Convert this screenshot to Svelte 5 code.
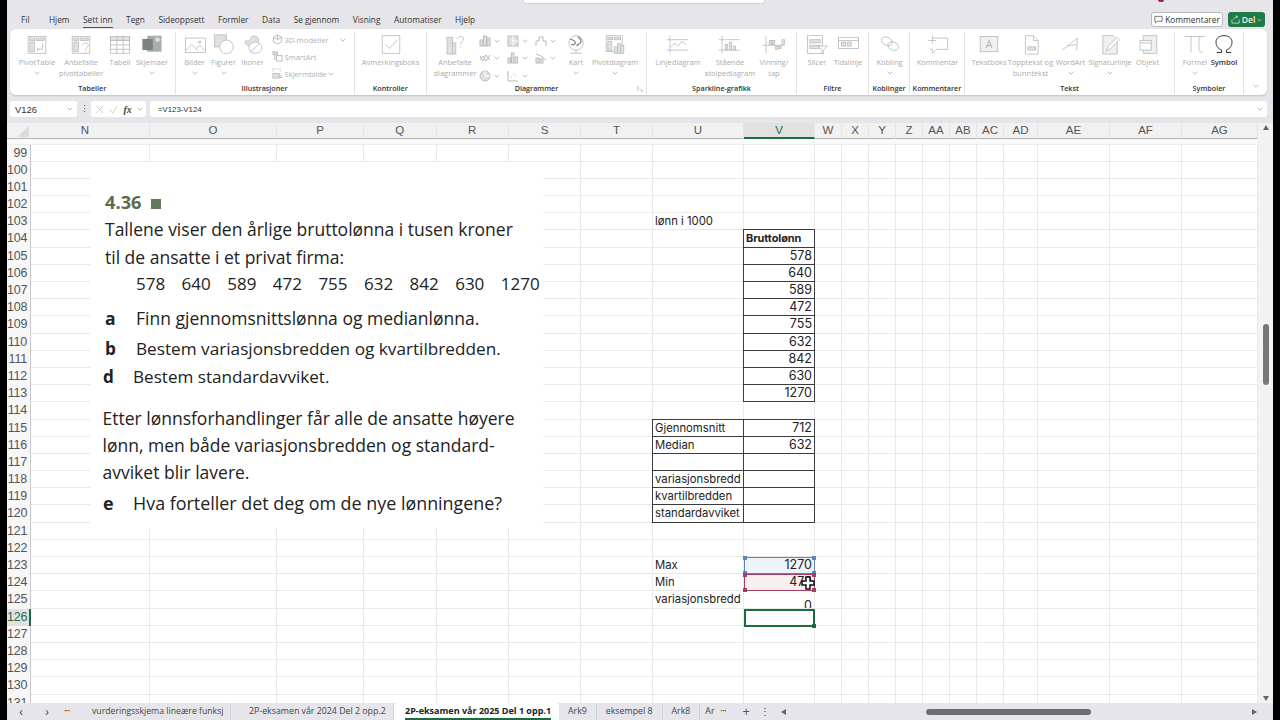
<script>
  const tabs = ['Fil', 'Hjem', 'Sett inn', 'Tegn', 'Sideoppsett', 'Formler', 'Data', 'Se gjennom', 'Visning', 'Automatiser', 'Hjelp'];

  const groups = [
    { name: 'Tabeller', w: 165.5, pad: 9, items: [
      { l: ['PivotTable'], ic: 'pivot', w: 36, ch: true },
      { l: ['Anbefalte', 'pivottabeller'], ic: 'pivot2', w: 52 },
      { l: ['Tabell'], ic: 'table', w: 26 },
      { l: ['Skjemaer'], ic: 'forms', w: 38, ch: true }
    ] },
    { name: 'Illustrasjoner', w: 179, pad: 4, small: 'illus', items: [
      { l: ['Bilder'], ic: 'image', w: 30, ch: true },
      { l: ['Figurer'], ic: 'shapes', w: 28, ch: true },
      { l: ['Ikoner'], ic: 'icons', w: 30 }
    ] },
    { name: 'Kontroller', w: 72.5, pad: 6, items: [
      { l: ['Avmerkingsboks'], ic: 'check', w: 60 }
    ] },
    { name: 'Diagrammer', w: 220, pad: 4, small: 'charts', launcher: true, items: [
      { l: ['Anbefalte', 'diagrammer'], ic: 'recchart', w: 48 },
      { l: ['Kart'], ic: 'globe', w: 26, ch: true, after: true },
      { l: ['Pivotdiagram'], ic: 'pivotchart', w: 52, ch: true, after: true }
    ] },
    { name: 'Sparkline-grafikk', w: 150, pad: 6, items: [
      { l: ['Linjediagram'], ic: 'sline', w: 50 },
      { l: ['Stående', 'stolpediagram'], ic: 'scol', w: 54 },
      { l: ['Vinning/', 'tap'], ic: 'swin', w: 34 }
    ] },
    { name: 'Filtre', w: 72, pad: 7, items: [
      { l: ['Slicer'], ic: 'slicer', w: 26 },
      { l: ['Tidslinje'], ic: 'timeline', w: 36 }
    ] },
    { name: 'Koblinger', w: 41, pad: 2, items: [
      { l: ['Kobling'], ic: 'link', w: 37, ch: true }
    ] },
    { name: 'Kommentarer', w: 55, pad: 2, items: [
      { l: ['Kommentar'], ic: 'comment', w: 51 }
    ] },
    { name: 'Tekst', w: 210, pad: 6, items: [
      { l: ['Tekstboks'], ic: 'textbox', w: 36 },
      { l: ['Topptekst og', 'bunntekst'], ic: 'header', w: 47 },
      { l: ['WordArt'], ic: 'wordart', w: 33, ch: true },
      { l: ['Signaturlinje'], ic: 'sign', w: 46, ch: true },
      { l: ['Objekt'], ic: 'object', w: 29 }
    ] },
    { name: 'Symboler', w: 69, pad: 6, items: [
      { l: ['Formel'], ic: 'pi', w: 28, ch: true },
      { l: ['Symbol'], ic: 'omega', w: 30, on: true }
    ] }
  ];

  const colDefs = [
    ['N', 119], ['O', 127], ['P', 87], ['Q', 72.5], ['R', 72.5], ['S', 72], ['T', 72], ['U', 91], ['V', 71],
    ['W', 27], ['X', 27], ['Y', 27], ['Z', 27], ['AA', 27], ['AB', 27], ['AC', 27], ['AD', 34], ['AE', 72], ['AF', 72], ['AG', 76]
  ];
  const rows = Array.from({ length: 33 }, (_, i) => 99 + i);
  const ROW_H = 17.19;
  const HEAD_W = 24;
  const HEAD_H = 21.5;

  const cells = {
    U103: { t: 'lønn i 1000' },
    V104: { t: 'Bruttolønn', bold: true, box: true },
    U115: { t: 'Gjennomsnitt', box: true },
    V115: { t: '712', num: true, box: true },
    U116: { t: 'Median', box: true },
    V116: { t: '632', num: true, box: true },
    U117: { t: '', box: true },
    V117: { t: '', box: true },
    U118: { t: 'variasjonsbredd', box: true },
    V118: { t: '', box: true },
    U119: { t: 'kvartilbredden', box: true },
    V119: { t: '', box: true },
    U120: { t: 'standardavviket', box: true },
    V120: { t: '', box: true },
    U123: { t: 'Max' },
    V123: { t: '1270', num: true },
    U124: { t: 'Min' },
    V124: { t: '472', num: true },
    U125: { t: 'variasjonsbredd' },
    V125: { t: '0', num: true, low: true }
  };
  [578, 640, 589, 472, 755, 632, 842, 630, 1270].forEach((n, i) => {
    cells['V' + (105 + i)] = { t: String(n), num: true, box: true };
  });

  const salaries = [578, 640, 589, 472, 755, 632, 842, 630, 1270];

  function colLeft(name) {
    let x = HEAD_W;
    for (const [c, w] of colDefs) {
      if (c === name) return x;
      x += w;
    }
    return x;
  }
  const rowTop = (r) => HEAD_H + (r - 99) * ROW_H;
  const gridColumns = HEAD_W + 'px ' + colDefs.map((c) => c[1] + 'px').join(' ');

  const selections = [
    { row: 123, kind: 'blue' },
    { row: 124, kind: 'red' }
  ];
</script>

{#snippet chevron()}
  <svg class="chev" viewBox="0 0 6 4" width="6" height="4"><path d="M.7.8 3 3.1 5.3.8" /></svg>
{/snippet}

{#snippet icon(name)}
  <svg class="ic" viewBox="0 0 30 26" width="24" height="21">
    {#if name === 'pivot'}
      <rect x="4" y="3" width="22" height="21" />
      <rect x="6" y="5" width="6" height="3" class="f" /><rect x="14" y="5" width="10" height="3" class="f" />
      <rect x="6" y="10" width="6" height="12" class="f" />
      <path d="M22 12v7h-7M17 17l-2 2 2 2" />
    {:else if name === 'pivot2'}
      <rect x="4" y="3" width="22" height="21" />
      <rect x="6" y="5" width="6" height="3" class="f" /><rect x="14" y="5" width="10" height="3" class="f" />
      <rect x="6" y="10" width="6" height="12" class="f" />
      <path d="M17 14c0-4 7-4 7 0 0 3-3.500 3-3.500 6M20.500 22v1.500" />
    {:else if name === 'table'}
      <rect x="3" y="3" width="24" height="21" />
      <rect x="3" y="3" width="24" height="5" class="f" />
      <path d="M3 8h24M3 13.500h24M3 19h24M11 3v21M19 3v21" />
    {:else if name === 'forms'}
      <rect x="9" y="2" width="18" height="20" class="fd" />
      <rect x="3" y="6" width="13" height="14" class="fdd" />
      <circle cx="22" cy="7" r="3" class="f" />
    {:else if name === 'image'}
      <rect x="3" y="5" width="25" height="18" />
      <path d="M3 21l8-8 8 8M16 18l5-4 7 7" class="s2" />
      <circle cx="21" cy="10" r="1.500" class="f" />
    {:else if name === 'shapes'}
      <rect x="3" y="1" width="15" height="15" class="f" />
      <circle cx="18" cy="16" r="8.500" class="w" />
    {:else if name === 'icons'}
      <path d="M5 9c2-1 4-1 6 0 0-5 4-8 8-6 3 1 4 5 2 8-3 3-9 5-13 3-2-1-3-3-3-5z" class="f" />
      <ellipse cx="18" cy="17" rx="8" ry="7" class="w" />
      <path d="M11 23 23 12" />
    {:else if name === 'check'}
      <rect x="4" y="2" width="22" height="22" />
      <path d="M8 13l5 5 10-11" class="s2" />
    {:else if name === 'recchart'}
      <rect x="5" y="4" width="7" height="21" class="f" />
      <rect x="12" y="11" width="4" height="14" class="f" />
      <path d="M18 6c0-4 8-4 8 0 0 3-4 3-4 7M22 15v1.500" />
    {:else if name === 'globe'}
      <circle cx="15" cy="11" r="9" />
      <path d="M8 6c3 2 5 1 6 4s-3 4-5 3M17 3c3 2 5 4 4 7s-4 2-5 5" class="sd" />
      <path d="M8 24h14M15 20v4" />
    {:else if name === 'pivotchart'}
      <rect x="4" y="2" width="20" height="20" />
      <rect x="6" y="4" width="6" height="3" class="f" /><rect x="14" y="4" width="8" height="3" class="f" />
      <rect x="6" y="9" width="5" height="12" class="f" />
      <rect x="14" y="16" width="4" height="8" class="f" /><rect x="18" y="12" width="4" height="12" class="f" /><rect x="22" y="14" width="4" height="10" class="f" />
    {:else if name === 'sline'}
      <path d="M5 2v22M1 7h27M1 20h27" /><path d="M6 16l5-5 4 4 5-6 5 4" />
    {:else if name === 'scol'}
      <path d="M5 2v22M1 7h26M1 20h26" />
      <rect x="9" y="13" width="3" height="7" class="f" /><rect x="14" y="10" width="3" height="10" class="f" /><rect x="19" y="15" width="3" height="5" class="f" />
    {:else if name === 'swin'}
      <path d="M5 2v22M1 14h27" />
      <rect x="9" y="8" width="3" height="5" class="f" /><rect x="13" y="8" width="3" height="5" class="f" /><rect x="17" y="15" width="3" height="4" class="f" /><rect x="21" y="15" width="3" height="3" class="f" /><rect x="25" y="7" width="3" height="6" class="f" />
    {:else if name === 'slicer'}
      <rect x="3" y="2" width="19" height="22" />
      <rect x="6" y="7" width="13" height="4" class="f" /><rect x="6" y="14" width="13" height="4" class="f" />
      <path d="M16 15h12l-5 5v5l-2-1v-4z" class="w" />
    {:else if name === 'timeline'}
      <rect x="3" y="4" width="25" height="14" />
      <path d="M3 8h25" /><rect x="7" y="10" width="5" height="5" class="f" /><rect x="14" y="10" width="5" height="5" class="f" />
    {:else if name === 'link'}
      <ellipse cx="11" cy="9" rx="7" ry="5" transform="rotate(25 11 9)" />
      <ellipse cx="19" cy="15" rx="7" ry="5" transform="rotate(25 19 15)" />
    {:else if name === 'comment'}
      <path d="M8 5h19v14H13l-5 5v-5H5" /><path d="M3 8h10M8 2v10" />
    {:else if name === 'textbox'}
      <rect x="4" y="3" width="22" height="19" class="fl" />
      <text x="15" y="17" class="ic-t">A</text>
    {:else if name === 'header'}
      <path d="M8 2h10l6 6v17H8z" /><path d="M18 2v6h6" />
      <rect x="11" y="16" width="10" height="4" class="f" />
    {:else if name === 'wordart'}
      <path d="M4 20 23 5l-1 15M10 15l12-2" class="s2" />
    {:else if name === 'sign'}
      <path d="M6 2h13l5 5v18H6z" class="fl" />
      <path d="M10 21l3-6 11-11 3 3-11 11z" class="w" />
    {:else if name === 'object'}
      <rect x="9" y="2" width="17" height="22" class="fl" />
      <rect x="5" y="8" width="14" height="12" class="w" />
      <path d="M5 11h14" />
    {:else if name === 'pi'}
      <path d="M2 3h25M10 3v20M20 3v16c0 3 2 4 5 3" class="s2" />
    {:else if name === 'omega'}
      <path d="M6 23h6v-3C7 18 5 14 5 10c0-5 4-8 10-8s10 3 10 8c0 4-2 8-7 10v3h6" class="dark" />
    {/if}
  </svg>
{/snippet}

{#snippet mini(kind)}
  <svg class="ic" viewBox="0 0 12 12" width="12" height="12">
    {#if kind === 'bar'}
      <rect x="1" y="5" width="3" height="6" class="f" /><rect x="4.500" y="1" width="3" height="10" class="f" /><rect x="8" y="3" width="3" height="8" class="f" />
    {:else if kind === 'tree'}
      <rect x="1" y="1" width="10" height="10" class="f" /><path d="M6 1v10M6 6h5" class="wl" />
    {:else if kind === 'water'}
      <path d="M1 11V6h3V2h4v4h3v5" />
    {:else if kind === 'line'}
      <path d="M1 4l3 5 3-6 4 5M1 8l3-4 3 5 4-6" />
    {:else if kind === 'stat'}
      <rect x="1" y="6" width="2.500" height="5" class="f" /><rect x="4.500" y="1" width="2.500" height="10" class="f" /><rect x="8" y="5" width="2.500" height="6" class="f" />
    {:else if kind === 'combo'}
      <rect x="1" y="6" width="3" height="5" class="f" /><rect x="5" y="7" width="3" height="4" class="f" /><path d="M1 2l5 2 5 4" />
    {:else if kind === 'pie'}
      <circle cx="6" cy="6" r="5" class="f" /><path d="M6 1v5h5" class="wl" />
    {:else if kind === 'scatter'}
      <path d="M1 1v10h10" /><path d="M4 7h1M6 4h1M8 6h1" />
    {/if}
  </svg>
{/snippet}

<div class="screen">
  <div class="letterbox"></div>
  <div class="app">
    <div class="titlebar">
      <div class="search"></div>
      <div class="avatar"></div>
    </div>

    <div class="menubar">
      <nav class="tabs">
        {#each tabs as tab}
          <span class="tab" class:active={tab === 'Sett inn'} class:file={tab === 'Fil'}>{tab}</span>
        {/each}
      </nav>
      <button class="comments">
        <svg viewBox="0 0 10 10" width="9" height="9"><path d="M1 1.500h8v5.500H3.500L1.500 9V7H1z" /></svg>
        Kommentarer
      </button>
      <button class="share">
        <svg viewBox="0 0 10 10" width="9" height="9"><path d="M1 5v4h8V5M3 5c0-2 2-3 4-3M5.500.5 7.500 2l-2 1.500" /></svg>
        Del
        <svg class="share-chev" viewBox="0 0 6 4" width="5" height="4"><path d="M.7.8 3 3.100 5.300.8" /></svg>
      </button>
    </div>

    <section class="ribbon">
      {#each groups as g}
        <div class="group" style="width:{g.w}px">
          <div class="group-body" style="padding-left:{g.pad}px">
            {#each g.items.filter((i) => !i.after) as item}
              <div class="rb" class:on={item.on} style="width:{item.w}px">
                {@render icon(item.ic)}
                {#each item.l as line}<span class="rb-label">{line}</span>{/each}
                {#if item.ch}{@render chevron()}{/if}
              </div>
            {/each}
            {#if g.small === 'illus'}
              <div class="small-col">
                <div class="small">
                  <svg class="ic" viewBox="0 0 12 12" width="11" height="11"><path d="M6 1l4.500 2.500v5L6 11 1.500 8.500v-5zM6 6V1M6 6l4.500-2.500M6 6l-4.500-2.500" /></svg>
                  <span>3D-modeller</span>
                  <span class="small-ch">{@render chevron()}</span>
                </div>
                <div class="small">
                  <svg class="ic" viewBox="0 0 12 12" width="11" height="11"><rect x="1" y="1" width="5" height="3" class="f" /><rect x="5" y="5" width="6" height="6" /><path d="M3 4v5h2" /></svg>
                  <span>SmartArt</span>
                </div>
                <div class="small">
                  <svg class="ic" viewBox="0 0 12 12" width="11" height="11"><path d="M1 1h8v3M1 1v4" stroke-dasharray="1 1" /><rect x="1" y="6" width="7" height="5" class="f" /><path d="M10 7v4M8.500 9.500 10 11l1.500-1.500" /></svg>
                  <span>Skjermbilde</span>
                  {@render chevron()}
                </div>
              </div>
            {/if}
            {#if g.small === 'charts'}
              <div class="chart-grid">
                {#each ['bar', 'tree', 'water', 'line', 'stat', 'combo', 'pie', 'scatter'] as kind}
                  <div class="chart-btn">{@render mini(kind)}{@render chevron()}</div>
                {/each}
              </div>
            {/if}
            {#each g.items.filter((i) => i.after) as item}
              <div class="rb" style="width:{item.w}px">
                {@render icon(item.ic)}
                {#each item.l as line}<span class="rb-label">{line}</span>{/each}
                {#if item.ch}{@render chevron()}{/if}
              </div>
            {/each}
          </div>
          <div class="group-name">
            {g.name}
            {#if g.launcher}
              <svg class="launcher" viewBox="0 0 8 8" width="6" height="6"><path d="M1 7V1h2M7 5v2H5M3 3l4 4" /></svg>
            {/if}
          </div>
        </div>
      {/each}
      <div class="collapse">{@render chevron()}</div>
    </section>

    <div class="formula-row">
      <div class="namebox">V126 {@render chevron()}</div>
      <span class="dots">⋮</span>
      <div class="fx-box">
        <svg class="fx-mark" viewBox="0 0 10 10" width="9" height="9"><path d="M1 1l8 8M9 1 1 9" /></svg>
        <svg class="fx-mark" viewBox="0 0 10 10" width="9" height="9"><path d="M1 5l3 4 5-8" /></svg>
        <span class="fx">fx</span>
        {@render chevron()}
      </div>
      <div class="formula">=V123-V124 <span class="formula-ch">{@render chevron()}</span></div>
    </div>

    <div class="workbook">
      <div class="sheet-wrap">
        <div class="sheet" style="grid-template-columns:{gridColumns};grid-template-rows:16px 5.500px repeat(33, {ROW_H}px)">
          <div class="corner"><span class="corner-mark"></span></div>
          {#each colDefs as [c]}
            <div class="col-head" class:cur={c === 'V'} class:part={c === 'N'}>{c}</div>
          {/each}
          <div class="stripe"></div>
          {#each rows as r}
            <div class="row-head" class:cur={r === 126}>{r}</div>
            {#each colDefs as [c]}
              {@const d = cells[c + r]}
              <div
                class="cell"
                class:box={d?.box}
                class:num={d?.num}
                class:bold={d?.bold}
                class:low={d?.low}
                class:tint-blue={c === 'V' && r === 123}
                class:tint-red={c === 'V' && r === 124}
              >{d?.t ?? ''}</div>
            {/each}
          {/each}
        </div>

        <!-- pasted picture of the exercise, lies over the grid -->
        <div class="picture">
          <div class="pic-title">4.36 <span class="pic-square"></span></div>
          <p class="l1">Tallene viser den årlige bruttolønna i tusen kroner</p>
          <p class="l2">til de ansatte i et privat firma:</p>
          <div class="numbers">
            {#each salaries as n}<span>{n}</span>{/each}
          </div>
          <p class="task t-a"><b>a</b>Finn gjennomsnittslønna og medianlønna.</p>
          <p class="task t-b"><b>b</b>Bestem variasjonsbredden og kvartilbredden.</p>
          <p class="task t-d"><b>d</b>Bestem standardavviket.</p>
          <p class="para">Etter lønnsforhandlinger får alle de ansatte høyere<br />lønn, men både variasjonsbredden og standard-<br />avviket blir lavere.</p>
          <p class="task t-e"><b>e</b>Hva forteller det deg om de nye lønningene?</p>
        </div>

        {#each selections as s}
          <div class="sel {s.kind}" style="left:{colLeft('V')}px;top:{rowTop(s.row)}px;height:{ROW_H}px">
            <i class="h tl"></i><i class="h tr"></i><i class="h bl"></i><i class="h br"></i>
          </div>
        {/each}
        <div class="sel green" style="left:{colLeft('V')}px;top:{rowTop(126)}px;height:{ROW_H + 1}px"><i class="h br"></i></div>

        <svg class="cursor" style="left:{colLeft('V') + 57}px;top:{rowTop(124) + 2}px" viewBox="0 0 14 14" width="14" height="14">
          <path d="M5 1h4v4h4v4H9v4H5V9H1V5h4z" />
        </svg>
      </div>

      <div class="vscroll">
        <span class="tri up"></span>
        <span class="vthumb"></span>
        <span class="tri down"></span>
      </div>
    </div>

    <footer class="sheetbar">
      <span class="nav nav-prev">‹</span>
      <span class="nav">›</span>
      <span class="nav more">•••</span>
      <span class="sheet-tab first">vurderingsskjema lineære funksj</span>
      <span class="sheet-tab second">2P-eksamen vår 2024 Del 2 opp.2</span>
      <span class="sheet-tab active"><span>2P-eksamen vår 2025 Del 1 opp.1</span></span>
      <span class="sheet-tab short">Ark9</span>
      <span class="sheet-tab short">eksempel 8</span>
      <span class="sheet-tab short">Ark8</span>
      <span class="sheet-tab short cut">Ar</span>
      <span class="nav more">•••</span>
      <span class="nav plus">+</span>
      <span class="nav kebab">⋮</span>
      <span class="htri left"></span>
      <div class="htrack"><span class="hthumb"></span></div>
      <span class="htri right"></span>
    </footer>
  </div>
  <div class="letterbox"></div>
</div>

<style>
  :global(body) {
    margin: 0;
    background: #000;
  }

  .screen {
    display: flex;
    width: 1280px;
    height: 720px;
    overflow: hidden;
  }

  .letterbox {
    width: 7px;
    flex: none;
    background: #000;
  }

  .app {
    flex: 1;
    min-width: 0;
    display: flex;
    flex-direction: column;
    background: #e6e6ea;
    font-family: "Open Sans", "Noto Sans", sans-serif;
  }

  .titlebar {
    height: 11px;
    flex: none;
    display: flex;
    align-items: flex-start;
  }

  .search {
    width: 242px;
    height: 4px;
    margin-left: 516px;
    background: #fff;
    border: 1px solid #d4d4d8;
    border-top: 0;
    box-sizing: border-box;
    border-radius: 0 0 3px 3px;
  }

  .avatar {
    width: 6px;
    height: 2px;
    margin-left: 393px;
    background: #a3243b;
    border-radius: 0 0 3px 3px;
  }

  .menubar {
    height: 18px;
    flex: none;
    display: flex;
    align-items: flex-start;
    padding-right: 8px;
  }

  .tabs {
    display: flex;
    gap: 13.5px;
    padding: 0.500px 0 0 14px;
    flex: 1;
    font-size: 8.3px;
    color: #333;
    line-height: 15px;
  }

  .tab {
    height: 15px;
    white-space: nowrap;
  }

  .tab.file {
    margin-right: 6px;
  }

  .tab.active {
    border-bottom: 1.5px solid #1d6b41;
  }

  .comments {
    height: 15px;
    width: 72px;
    margin: 1px 5px 0 0;
    padding: 0;
    display: flex;
    align-items: center;
    justify-content: center;
    gap: 2px;
    background: #fff;
    border: 1px solid #b9b9bd;
    border-radius: 3px;
    font: 8.4px "Open Sans", sans-serif;
    color: #333;
  }

  .comments svg {
    fill: none;
    stroke: #444;
    stroke-width: 0.8;
  }

  .share {
    height: 15px;
    width: 37px;
    margin-top: 1px;
    padding: 0;
    display: flex;
    align-items: center;
    justify-content: center;
    gap: 2px;
    background: #1f7a45;
    border: 0;
    border-radius: 3px;
    color: #eaf5ee;
    font: 600 8.6px "Open Sans", sans-serif;
  }

  .share svg {
    fill: none;
    stroke: #e4f2e9;
    stroke-width: 0.8;
  }

  .ribbon {
    height: 66px;
    flex: none;
    margin: 0 6px 0 3px;
    display: flex;
    background: #fff;
    border-radius: 6px;
    box-shadow: 0 1px 2px rgba(0, 0, 0, 0.16);
  }

  .group {
    position: relative;
    flex: none;
    box-sizing: border-box;
    height: 62px;
    margin-top: 3px;
    display: flex;
    flex-direction: column;
    border-right: 1px solid #e3e3e3;
  }

  .group-body {
    flex: 1;
    display: flex;
    align-items: flex-start;
    min-height: 0;
  }

  .group-name {
    position: relative;
    height: 12px;
    font-size: 7.2px;
    line-height: 12px;
    font-weight: 600;
    color: #333;
    text-align: center;
    white-space: nowrap;
  }

  .launcher {
    position: absolute;
    right: 3px;
    top: 4px;
    fill: none;
    stroke: #aaa;
    stroke-width: 0.8;
  }

  .rb {
    flex: none;
    display: flex;
    flex-direction: column;
    align-items: center;
    color: #ababab;
    font-size: 7.5px;
    line-height: 10.5px;
    white-space: nowrap;
  }

  .rb.on {
    color: #333;
    font-weight: 600;
  }

  .rb > .ic {
    margin: 2px 0 2px;
  }

  .rb-label {
    display: block;
  }

  .chev {
    flex: none;
    fill: none;
    stroke: #a9a9a9;
    stroke-width: 0.8;
  }

  .rb .chev {
    margin-top: 3px;
  }

  .ic {
    flex: none;
    fill: none;
    stroke: #b9b9b9;
    stroke-width: 1;
  }

  .ic .f {
    fill: #e0e0e0;
    stroke: #bdbdbd;
  }

  .ic .fl {
    fill: #f0f0f0;
  }

  .ic .fd {
    fill: #a9adab;
    stroke: none;
  }

  .ic .fdd {
    fill: #7d8280;
    stroke: none;
  }

  .ic .w {
    fill: #fff;
  }

  .ic .wl {
    stroke: #fff;
  }

  .ic .s2 {
    stroke: #c2c2c2;
    stroke-width: 1.2;
  }

  .ic .sd {
    stroke: #7a7a7a;
    stroke-width: 1.500;
  }

  .ic .dark {
    stroke: #2a2a2a;
    stroke-width: 1.2;
  }

  .ic-t {
    fill: #b0b0b0;
    stroke: none;
    font-size: 13px;
    text-anchor: middle;
    font-family: "Open Sans", sans-serif;
  }

  .small-col {
    display: flex;
    flex-direction: column;
    gap: 6px;
    padding: 2px 0 0 4px;
  }

  .small {
    height: 11px;
    display: flex;
    align-items: center;
    gap: 2px;
    font-size: 7.6px;
    color: #b0b0b0;
    white-space: nowrap;
  }

  .small-ch {
    margin-left: 9px;
    display: flex;
  }

  .chart-grid {
    display: grid;
    grid-template-columns: repeat(3, 28px);
    grid-auto-rows: 17.500px;
    width: 84px;
  }

  .chart-btn {
    display: flex;
    align-items: center;
    gap: 3px;
  }

  .collapse {
    flex: 1;
    display: flex;
    justify-content: center;
    padding-top: 55px;
  }

  .formula-row {
    height: 16px;
    flex: none;
    margin: 6px 6px 6px 3px;
    display: flex;
    align-items: stretch;
    gap: 0;
  }

  .namebox {
    width: 67px;
    box-sizing: border-box;
    padding: 0 4px 0 5px;
    display: flex;
    align-items: center;
    justify-content: space-between;
    background: #fff;
    border-radius: 3px;
    font: 9.400px "Liberation Sans", sans-serif;
    color: #333;
  }

  .dots {
    width: 14px;
    text-align: center;
    font-size: 9px;
    line-height: 16px;
    color: #555;
  }

  .fx-box {
    width: 55px;
    box-sizing: border-box;
    padding: 0 3px 0 4px;
    display: flex;
    align-items: center;
    justify-content: space-between;
    background: #fff;
    border-radius: 3px;
  }

  .fx-mark {
    fill: none;
    stroke: #bdbdbd;
    stroke-width: 0.8;
  }

  .fx {
    font: italic 600 10px "Liberation Serif", serif;
    color: #444;
  }

  .formula {
    flex: 1;
    margin-left: 4px;
    padding: 0 3px 0 8px;
    display: flex;
    align-items: center;
    justify-content: space-between;
    background: #fff;
    border-radius: 3px;
    font: 7.800px "Liberation Sans", sans-serif;
    color: #333;
  }

  .formula-ch {
    display: flex;
    margin-right: 1px;
  }

  .workbook {
    flex: 1;
    min-height: 0;
    display: flex;
  }

  .sheet-wrap {
    position: relative;
    flex: 1;
    min-width: 0;
    overflow: hidden;
    background: #fff;
  }

  .sheet {
    display: grid;
    font-family: Inter, "Liberation Sans", sans-serif;
  }

  .corner {
    position: relative;
    background: #f1f1f1;
    border-bottom: 1px solid #b3b3b3;
    box-sizing: border-box;
  }

  .corner-mark {
    position: absolute;
    right: 2px;
    bottom: 1px;
    width: 0;
    height: 0;
    border-left: 12px solid transparent;
    border-bottom: 11px solid #dcdcdc;
  }

  .col-head {
    box-sizing: border-box;
    background: #f1f1f1;
    border-bottom: 1px solid #b3b3b3;
    border-right: 1px solid #e6e6e6;
    text-align: center;
    font: 11.500px/15px "Liberation Sans", sans-serif;
    color: #555;
  }

  .col-head.part {
    padding-right: 10px;
  }

  .col-head.cur {
    background: #dfe2df;
    border-bottom: 2px solid #1d6b41;
    color: #2b6b47;
  }

  .stripe {
    grid-column: 1 / -1;
    background: #fafafa;
    border-bottom: 1px solid #eee;
    box-sizing: border-box;
  }

  .row-head {
    box-sizing: border-box;
    background: #f7f7f7;
    border-right: 1px solid #c8c8c8;
    text-align: right;
    padding-right: 3px;
    font: 12.500px/17px "Liberation Sans", sans-serif;
    letter-spacing: -0.2px;
    color: #555;
    white-space: nowrap;
  }

  .row-head.cur {
    background: #dfe2df;
    border-right: 2px solid #1d6b41;
    padding-right: 2px;
    color: #2b6b47;
  }

  .cell {
    box-sizing: border-box;
    min-width: 0;
    padding: 0 2px;
    overflow: hidden;
    white-space: nowrap;
    border-right: 1px solid #e9e9e9;
    border-bottom: 1px solid #e9e9e9;
    font-size: 11.300px;
    line-height: 16px;
    color: #222;
  }

  .cell.box {
    border: 1px solid #3c3c3c;
    margin: -1px 0 0 -1px;
    z-index: 1;
  }

  .cell.num {
    text-align: right;
    font-size: 12.500px;
  }

  .cell.bold {
    font-size: 11px;
    font-weight: 700;
    letter-spacing: -0.1px;
  }

  .cell.low {
    padding-top: 7px;
  }

  .tint-blue {
    background: #edf3fb;
  }

  .tint-red {
    background: #f9efef;
  }

  .picture {
    position: absolute;
    left: 83px;
    top: 39px;
    width: 453px;
    height: 366px;
    background: #fff;
    font-family: "Open Sans", "Noto Sans", sans-serif;
    color: #222;
    font-size: 17.500px;
    line-height: 24px;
  }

  .picture p {
    margin: 0;
    white-space: nowrap;
  }

  .pic-title {
    position: absolute;
    left: 15px;
    top: 28px;
    font-weight: 700;
    font-size: 18.300px;
    line-height: 24px;
    color: #5d6b4e;
  }

  .pic-square {
    display: inline-block;
    width: 10px;
    height: 10px;
    margin-left: 5px;
    background: #67775a;
  }

  .picture p,
  .numbers {
    position: absolute;
  }

  .l1 {
    left: 15px;
    top: 55px;
  }

  .l2 {
    left: 15px;
    top: 83px;
  }

  .numbers {
    left: 46px;
    top: 110px;
    display: grid;
    grid-template-columns: repeat(8, 45.600px) auto;
    font-size: 17px;
  }

  .task b {
    display: inline-block;
    width: 31px;
    font-weight: 700;
  }

  .t-a {
    left: 15px;
    top: 144px;
  }

  .t-b {
    left: 15px;
    top: 174.500px;
    font-size: 17.200px;
  }

  .t-d {
    left: 13px;
    top: 203px;
    font-size: 17.100px;
  }

  .t-d b,
  .t-e b {
    width: 30px;
  }

  .para {
    left: 12.500px;
    top: 243px;
    line-height: 27px;
  }

  .t-e {
    left: 13px;
    top: 329px;
    font-size: 17.900px;
  }

  .sel {
    position: absolute;
    width: 71px;
    box-sizing: border-box;
    border: 1px solid;
    z-index: 2;
  }

  .sel.blue {
    border-color: #5f82b8;
  }

  .sel.red {
    border-color: #a33f63;
  }

  .sel.green {
    border: 2px solid #1d6b41;
  }

  .h {
    position: absolute;
    width: 4px;
    height: 4px;
    background: currentColor;
  }

  .blue .h {
    color: #5f82b8;
  }

  .red .h {
    color: #a33f63;
  }

  .green .h {
    color: #1d6b41;
    right: -3px;
    bottom: -3px;
  }

  .tl {
    left: -2px;
    top: -2px;
  }

  .tr {
    right: -2px;
    top: -2px;
  }

  .bl {
    left: -2px;
    bottom: -2px;
  }

  .blue .br,
  .red .br {
    right: -2px;
    bottom: -2px;
  }

  .cursor {
    position: absolute;
    z-index: 3;
    fill: #fff;
    stroke: #111;
    stroke-width: 1.500;
  }

  .vscroll {
    width: 15px;
    flex: none;
    position: relative;
    background: #f2f2f2;
    display: flex;
    flex-direction: column;
    align-items: center;
  }

  .tri {
    width: 0;
    height: 0;
    border-left: 3.500px solid transparent;
    border-right: 3.500px solid transparent;
  }

  .tri.up {
    margin-top: 2px;
    border-bottom: 5px solid #666;
  }

  .tri.down {
    margin-top: auto;
    margin-bottom: 2px;
    border-top: 5px solid #666;
  }

  .vthumb {
    width: 6px;
    height: 61px;
    margin-top: 194px;
    background: #777;
    border-radius: 3px;
  }

  .sheetbar {
    height: 17px;
    flex: none;
    display: flex;
    align-items: center;
    font-size: 8.800px;
    color: #444;
    white-space: nowrap;
  }

  .nav {
    color: #444;
    flex: none;
    font-size: 12px;
    line-height: 17px;
    width: 26px;
    text-align: center;
  }

  .nav-prev {
    margin-left: 1px;
  }

  .nav.more {
    font-size: 5px;
    width: 14px;
    color: #333;
  }

  .nav.plus {
    width: 22px;
    margin-left: 5px;
    font-size: 13px;
    color: #555;
  }

  .nav.kebab {
    width: 16px;
    font-size: 10px;
  }

  .sheet-tab {
    flex: none;
    height: 17px;
    line-height: 17px;
    padding: 0 8px;
    box-sizing: border-box;
    border-right: 1px solid #d2d2d6;
  }

  .sheet-tab.first {
    margin-left: 9px;
    width: 148px;
    padding-left: 9px;
    font-size: 8.700px;
  }

  .sheet-tab.second {
    width: 163px;
    padding-left: 18px;
  }

  .sheet-tab.active {
    width: 165px;
    padding: 0 8px 0 11px;
    background: #fff;
    border-right: 0;
    font-size: 9px;
    font-weight: 700;
    color: #222;
    border-radius: 3px 3px 0 0;
  }

  .sheet-tab.active span {
    display: block;
    height: 15px;
    line-height: 15px;
    border-bottom: 2px solid #1d6b41;
  }

  .sheet-tab.short {
    padding: 0 9px;
  }

  .sheet-tab.cut {
    border-right: 0;
    padding: 0 0 0 5px;
    width: 16px;
    overflow: hidden;
  }

  .htri {
    flex: none;
    width: 0;
    height: 0;
    border-top: 3.500px solid transparent;
    border-bottom: 3.500px solid transparent;
  }

  .htri.left {
    margin-left: 8px;
    border-right: 5px solid #666;
  }

  .htri.right {
    border-left: 5px solid #666;
    margin-right: 16px;
  }

  .htrack {
    flex: 1;
    display: flex;
    padding-left: 140px;
  }

  .hthumb {
    width: 165px;
    height: 6px;
    background: #6e6e6e;
    border-radius: 3px;
  }
</style>
